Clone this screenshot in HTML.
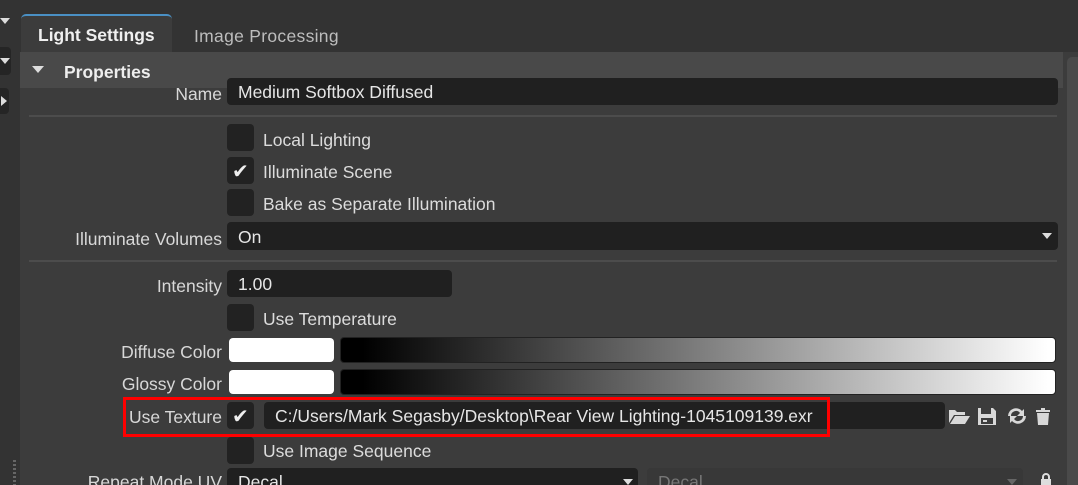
<!DOCTYPE html>
<html><head><meta charset="utf-8"><style>
*{margin:0;padding:0;box-sizing:border-box}
html,body{width:1078px;height:485px;overflow:hidden}
body{background:#333;font-family:"Liberation Sans",sans-serif;font-size:17.5px;color:#dcdcdc;position:relative}
.a{position:absolute}
.lbl{position:absolute;right:856px;text-align:right;white-space:nowrap;color:#d8d8d8}
.cb{position:absolute;left:227px;width:27px;height:27px;background:#222;border-radius:4px}
.ct{position:absolute;left:263px;white-space:nowrap}
.fld{position:absolute;background:#202020;border-radius:4px;padding-left:11px;white-space:nowrap;color:#e6e6e6}
.sep{position:absolute;left:29px;width:1028px;height:2px;background:#4c4c4c}
.chk{color:#eee;font-size:20px;position:absolute;left:5px;top:2px}
</style></head><body>
<div class="a" style="left:0;top:0;width:20px;height:485px;background:#333"></div>
<div class="a" style="left:0;top:47px;width:11px;height:28px;background:#252525;border-radius:0 4px 4px 0"></div>
<div class="a" style="left:0;top:88px;width:9px;height:26px;background:#252525;border-radius:0 4px 4px 0"></div>
<div class="a" style="left:0;top:18px;width:0;height:0;border-left:5px solid transparent;border-right:5px solid transparent;border-top:6px solid #ddd"></div>
<div class="a" style="left:0;top:58px;width:0;height:0;border-left:5px solid transparent;border-right:5px solid transparent;border-top:6px solid #ddd"></div>
<div class="a" style="left:1px;top:96px;width:0;height:0;border-top:5px solid transparent;border-bottom:5px solid transparent;border-left:6px solid #ddd"></div>
<div class="a" style="left:13px;top:460px;width:3px;height:25px;background:repeating-linear-gradient(#666 0 2px,transparent 2px 4px)"></div>
<div class="a" style="left:20px;top:52px;width:1058px;height:433px;background:#3c3c3c"></div>
<div class="a" style="left:1067px;top:57px;width:11px;height:428px;background:#4a4a4a;border-radius:5px 0 0 0"></div>
<div class="a" style="left:21px;top:14px;width:151px;height:39px;background:#3c3c3c;border-top:2px solid #4a90c4;border-radius:5px 5px 0 0"></div>
<div class="a" style="left:38px;top:25px;font-weight:bold;color:#f0f0f0;font-size:17.5px">Light Settings</div>
<div class="a" style="left:194px;top:26px;color:#bdbdbd;font-size:17.5px;letter-spacing:0.3px">Image Processing</div>
<div class="a" style="left:20px;top:52px;width:1043px;height:36px;background:#494949"></div>
<div class="a" style="left:32px;top:66px;width:0;height:0;border-left:6px solid transparent;border-right:6px solid transparent;border-top:7px solid #ddd"></div>
<div class="a" style="left:64px;top:62px;font-weight:bold;color:#eee;font-size:17.5px">Properties</div>
<div class="lbl" style="top:84px">Name</div>
<div class="fld" style="left:227px;top:78px;width:831px;height:27px;line-height:29px">Medium Softbox Diffused</div>
<div class="sep" style="top:115px"></div>
<div class="cb" style="top:124px"></div><div class="ct" style="top:130px">Local Lighting</div>
<div class="cb" style="top:157px"><span class="chk">✔</span></div><div class="ct" style="top:162px">Illuminate Scene</div>
<div class="cb" style="top:189px"></div><div class="ct" style="top:194px">Bake as Separate Illumination</div>
<div class="lbl" style="top:229px">Illuminate Volumes</div>
<div class="fld" style="left:227px;top:222px;width:831px;height:28px;line-height:30px">On</div>
<div class="a" style="left:1042px;top:233px;border-left:5px solid transparent;border-right:5px solid transparent;border-top:6px solid #ddd"></div>
<div class="sep" style="top:260px"></div>
<div class="lbl" style="top:276px">Intensity</div>
<div class="fld" style="left:227px;top:270px;width:225px;height:27px;line-height:29px">1.00</div>
<div class="cb" style="top:304px"></div><div class="ct" style="top:309px">Use Temperature</div>
<div class="lbl" style="top:342px">Diffuse Color</div>
<div class="a" style="left:229px;top:338px;width:105px;height:24px;background:#fff;border-radius:4px"></div>
<div class="a" style="left:340px;top:337px;width:716px;height:26px;background:linear-gradient(90deg,#000 3%,#fff 99%);border-radius:4px;border:1px solid #222"></div>
<div class="lbl" style="top:374px">Glossy Color</div>
<div class="a" style="left:229px;top:370px;width:105px;height:24px;background:#fff;border-radius:4px"></div>
<div class="a" style="left:340px;top:369px;width:716px;height:26px;background:linear-gradient(90deg,#000 3%,#fff 99%);border-radius:4px;border:1px solid #222"></div>
<div class="lbl" style="top:407px">Use Texture</div>
<div class="cb" style="top:402px"><span class="chk">✔</span></div>
<div class="fld" style="left:264px;top:402px;width:681px;height:27px;line-height:29px">C:/Users/Mark Segasby/Desktop\Rear View Lighting-1045109139.exr</div>
<div class="a" style="left:123px;top:397px;width:707px;height:40px;border:3px solid #f00"></div>
<svg class="a" style="left:948px;top:403px" width="110" height="26" viewBox="0 0 110 26">
<path d="M1 20V7h6l2 2h8v3H6L1 20zM2 21l5-8h15l-5 8z" fill="#d8d8d8"/>
<path d="M30 5h15l3 3v14H30zM33 5v6h10V5zM33 15h12v6H33zM35 17h4v2h-4z" fill="#d8d8d8" fill-rule="evenodd"/>
<path d="M60 13a8 8 0 0 1 14-5l2-2v7h-7l3-3a5 5 0 0 0-9 3zM78 13a8 8 0 0 1-14 5l-2 2v-7h7l-3 3a5 5 0 0 0 9-3z" fill="#d8d8d8"/>
<path d="M88 7h14v2H88zM93 5h4v2h-4zM89 10h12l-1 12H90z" fill="#d8d8d8"/>
</svg>
<div class="cb" style="top:437px"></div><div class="ct" style="top:441px">Use Image Sequence</div>
<div class="lbl" style="top:472px">Repeat Mode UV</div>
<div class="fld" style="left:227px;top:468px;width:411px;height:28px;line-height:28px">Decal</div>
<div class="a" style="left:623px;top:479px;border-left:5px solid transparent;border-right:5px solid transparent;border-top:6px solid #ddd"></div>
<div class="fld" style="left:647px;top:468px;width:376px;height:28px;line-height:28px;background:#383838;color:#777">Decal</div>
<div class="a" style="left:1007px;top:479px;border-left:5px solid transparent;border-right:5px solid transparent;border-top:6px solid #666"></div>
<svg class="a" style="left:1039px;top:472px" width="14" height="14"><path d="M3 7V5a4 4 0 0 1 8 0v2h1v7H2V7zM5 7h4V5a2 2 0 0 0-4 0z" fill="#ddd" fill-rule="evenodd"/></svg>
</body></html>
